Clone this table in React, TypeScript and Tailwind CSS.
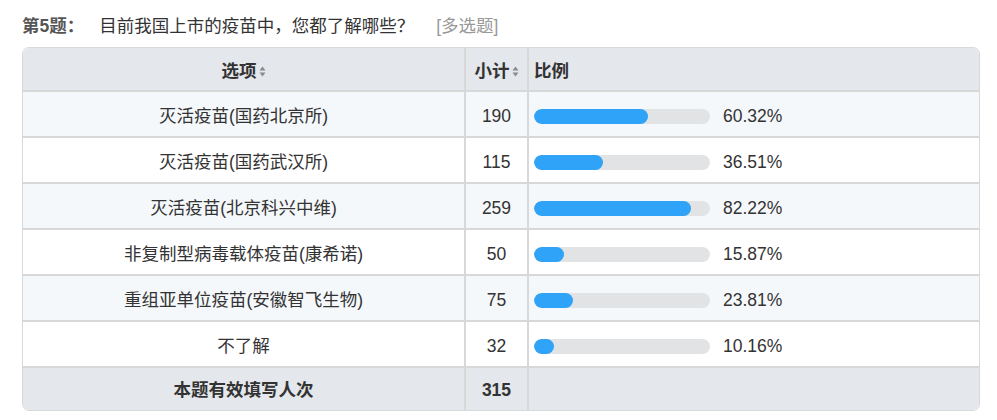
import React from "react";

const rows = [
  { name: "灭活疫苗(国药北京所)", count: 190, pct: "60.32%", bar: 114 },
  { name: "灭活疫苗(国药武汉所)", count: 115, pct: "36.51%", bar: 69 },
  { name: "灭活疫苗(北京科兴中维)", count: 259, pct: "82.22%", bar: 157 },
  { name: "非复制型病毒载体疫苗(康希诺)", count: 50, pct: "15.87%", bar: 30 },
  { name: "重组亚单位疫苗(安徽智飞生物)", count: 75, pct: "23.81%", bar: 39 },
  { name: "不了解", count: 32, pct: "10.16%", bar: 20 },
];

function SortIcon() {
  return (
    <svg width="7" height="11" viewBox="0 0 7 11" className="ml-[2px] inline-block">
      <path d="M3.5 0.5 L6.5 4.5 L0.5 4.5 Z" fill="#8a8a8a" />
      <path d="M3.5 10.5 L6.5 6.5 L0.5 6.5 Z" fill="#8a8a8a" />
    </svg>
  );
}

export default function App() {
  return (
    <div
      className="w-[997px] h-[420px] bg-white text-[#333] overflow-hidden"
      style={{ fontFamily: '"Liberation Sans", Arial, "Noto Sans CJK SC", sans-serif' }}
    >
      <div className="pl-[22px] pt-[14px]">
        <div className="flex items-center h-[24px] text-[17.5px]">
          <span className="font-bold text-[#555]">第5题：</span>
          <span className="ml-[15px] text-[#333]">目前我国上市的疫苗中，您都了解哪些？</span>
          <span className="ml-[22px] text-[#999]">[多选题]</span>
        </div>
      </div>

      <div className="ml-[22px] mt-[9px] w-[958px] rounded-[7px] border border-[#d9d9d9] overflow-hidden">
        {/* header */}
        <div className="flex h-[44px] bg-[#e4e7eb] border-b-2 border-[#d8d8d8] font-bold text-[17.5px] text-[#333]">
          <div className="w-[443px] pt-[5px] flex items-center justify-center border-r-2 border-[#d8d8d8]">
            选项<SortIcon />
          </div>
          <div className="w-[63px] pt-[5px] flex items-center justify-center border-r-2 border-[#d8d8d8]">
            小计<SortIcon />
          </div>
          <div className="flex-1 pt-[5px] flex items-center pl-[5px]">比例</div>
        </div>

        {rows.map((r, i) => (
          <div
            key={r.name}
            className={`flex h-[46px] border-b-2 border-[#d8d8d8] text-[17.5px] ${
              i % 2 === 0 ? "bg-[#f5f8fb]" : "bg-white"
            }`}
          >
            <div className="w-[443px] pt-[5px] flex items-center justify-center border-r-2 border-[#d8d8d8]">
              {r.name}
            </div>
            <div className="w-[63px] pt-[5px] flex items-center justify-center border-r-2 border-[#d8d8d8]">
              {r.count}
            </div>
            <div className="flex-1 pt-[5px] flex items-center pl-[5px]">
              <div className="w-[176px] h-[15px] rounded-full bg-[#e2e3e5] overflow-hidden">
                <div className="h-full rounded-full bg-[#2ea3f7]" style={{ width: r.bar }} />
              </div>
              <span className="ml-[13px]">{r.pct}</span>
            </div>
          </div>
        ))}

        {/* footer */}
        <div className="flex h-[42px] bg-[#e4e7eb] font-bold text-[17.5px] text-[#333]">
          <div className="w-[443px] pt-[2px] flex items-center justify-center border-r-2 border-[#d8d8d8]">
            本题有效填写人次
          </div>
          <div className="w-[63px] pt-[2px] flex items-center justify-center border-r-2 border-[#d8d8d8]">
            315
          </div>
          <div className="flex-1" />
        </div>
      </div>
    </div>
  );
}
